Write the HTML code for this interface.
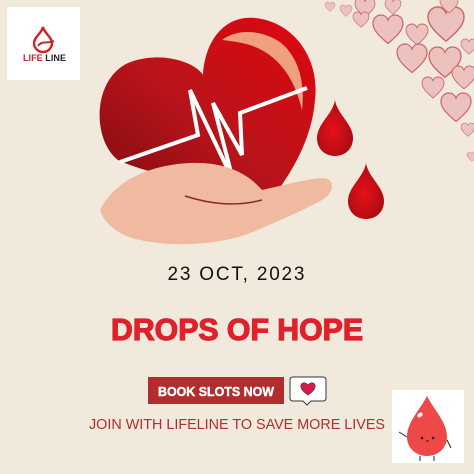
<!DOCTYPE html>
<html><head><style>
html,body{margin:0;padding:0;background:#f1e9dc;}
svg{display:block}
</style></head><body>
<svg width="474" height="474" viewBox="0 0 474 474" xmlns="http://www.w3.org/2000/svg">
<defs>
<path id="h" d="M.5 .95 C.2 .7 0 .5 0 .28 C0 .1 .13 0 .27 0 C.38 0 .46 .07 .5 .17 C.54 .07 .62 0 .73 0 C.87 0 1 .1 1 .28 C1 .5 .8 .7 .5 .95Z"/>
<linearGradient id="hg" x1="0" y1="1" x2="1" y2="0">
<stop offset="0" stop-color="#7e0c10"/><stop offset=".45" stop-color="#b8141a"/><stop offset="1" stop-color="#e0060f"/></linearGradient>
<radialGradient id="dg" cx=".45" cy=".55" r=".6"><stop offset="0" stop-color="#e8101a"/><stop offset="1" stop-color="#a50c12"/></radialGradient>
<path id="drop" d="M0,0 C2,14 18,24 18,38 C18,49 10,56 0,56 C-10,56 -18,49 -18,38 C-18,24 -2,14 0,0Z"/>
</defs>
<rect width="474" height="474" fill="#f1e9dc"/>
<g fill="#ecc2bf" stroke="#cc6466" stroke-width="0.04">
<use href="#h" transform="translate(325,2) scale(10)"/>
<use href="#h" transform="translate(340,5) scale(12)"/>
<use href="#h" transform="translate(355,-2) scale(20)"/>
<use href="#h" transform="translate(353,12) scale(16)"/>
<use href="#h" transform="translate(373,15) scale(30)"/>
<use href="#h" transform="translate(385,-1) scale(16)"/>
<use href="#h" transform="translate(406,24) scale(22)"/>
<use href="#h" transform="translate(428,7) scale(36)"/>
<use href="#h" transform="translate(440,-4) scale(18)"/>
<use href="#h" transform="translate(397,44) scale(30)"/>
<use href="#h" transform="translate(429,47) scale(32)"/>
<use href="#h" transform="translate(461,39) scale(16)"/>
<use href="#h" transform="translate(422,77) scale(22)"/>
<use href="#h" transform="translate(452,66) scale(24)"/>
<use href="#h" transform="translate(441,93) scale(30)"/>
<use href="#h" transform="translate(461,123) scale(14)"/>
<use href="#h" transform="translate(467,152) scale(10)"/>
</g>
<rect x="7" y="7" width="73" height="73" fill="#fff"/>
<path d="M43,27 C44,33 52,37 52,43 C52,48 48,52 43,52 C38,52 34,48 34,43 C34,37 42,33 43,27Z" fill="none" stroke="#d0202a" stroke-width="2.4"/>
<path d="M38,46 C42,40 48,44 54,41" stroke="#d0202a" stroke-width="2" fill="none"/>
<text x="23" y="61" font-family="Liberation Sans,sans-serif" font-weight="bold" font-size="9" textLength="43"><tspan fill="#d0202a">LIFE</tspan><tspan fill="#222"> LINE</tspan></text>
<path d="M273,197 C250,188 160,180 118,160 C92,140 92,80 128,63 C160,50 195,62 203,75 C205,40 225,15 255,18 C295,22 320,60 315,100 C312,140 290,175 273,197Z" fill="url(#hg)"/>
<path d="M222,40 C235,30 258,28 280,42 C300,58 305,85 302,110 C295,80 280,55 250,45 C240,42 230,41 222,40Z" fill="#f0a080"/>
<polyline points="120,162 198,135 190,90 233,180 213,103 242,155 240,113 307,88" fill="none" stroke="#fff" stroke-width="4" stroke-linejoin="miter"/>
<path d="M100,210 C115,180 150,165 190,163 C220,162 245,170 262,190 C285,185 310,178 325,178 C336,181 333,194 322,200 C300,212 270,225 245,235 C215,245 170,247 140,240 C120,236 105,225 100,210Z" fill="#efbaa0"/>
<path d="M185,196 C210,204 235,207 262,200" stroke="#8a2a22" stroke-width="1.5" fill="none"/>
<use href="#drop" transform="translate(335,100)" fill="url(#dg)"/>
<use href="#drop" transform="translate(366,163)" fill="url(#dg)"/>
<text x="236" y="280" text-anchor="middle" font-family="Liberation Sans,sans-serif" font-size="19" fill="#111" textLength="137">23 OCT, 2023</text>
<text x="237" y="340" text-anchor="middle" font-family="Liberation Sans,sans-serif" font-weight="bold" font-size="31" fill="#e0202a" stroke="#e0202a" stroke-width="1.2" textLength="252" lengthAdjust="spacingAndGlyphs">DROPS OF HOPE</text>
<rect x="148" y="377" width="136" height="27" fill="#b32c2e"/>
<text x="216" y="396" text-anchor="middle" font-family="Liberation Sans,sans-serif" font-weight="bold" font-size="12.5" fill="#fff" stroke="#fff" stroke-width=".4" textLength="116" lengthAdjust="spacingAndGlyphs">BOOK SLOTS NOW</text>
<path d="M293,377 H323 Q326,377 326,380 V398 Q326,401 323,401 H311 L307,405 L303,401 H293 Q290,401 290,398 V380 Q290,377 293,377Z" fill="#fff" stroke="#333" stroke-width="1"/>
<path d="M308,395 C302,391 300,388 301,385 C302,382 306,382 308,385 C310,382 314,382 315,385 C316,388 314,391 308,395Z" fill="#d81a4a" stroke="#333" stroke-width=".6"/>
<text x="237" y="429" text-anchor="middle" font-family="Liberation Sans,sans-serif" font-size="15" fill="#b32c2e" textLength="296" lengthAdjust="spacingAndGlyphs">JOIN WITH LIFELINE TO SAVE MORE LIVES</text>
<rect x="392" y="390" width="72" height="73" fill="#fff"/>
<path d="M427,396 C434,410 447,422 447,437 C447,448 438,456 427,456 C416,456 407,448 407,437 C407,422 420,410 427,396Z" fill="#ee4848"/>
<ellipse cx="420" cy="415" rx="3" ry="2" fill="#fff" transform="rotate(-40 420 415)"/>
<circle cx="422" cy="438" r="1.3" fill="#222"/><circle cx="433" cy="438" r="1.3" fill="#222"/>
<path d="M426,441 H429" stroke="#222" stroke-width="1"/>
<path d="M407,437 L399,432 M447,440 L451,448 M420,456 V461 M434,456 V461" stroke="#222" stroke-width="1" fill="none"/>
</svg>
</body></html>
